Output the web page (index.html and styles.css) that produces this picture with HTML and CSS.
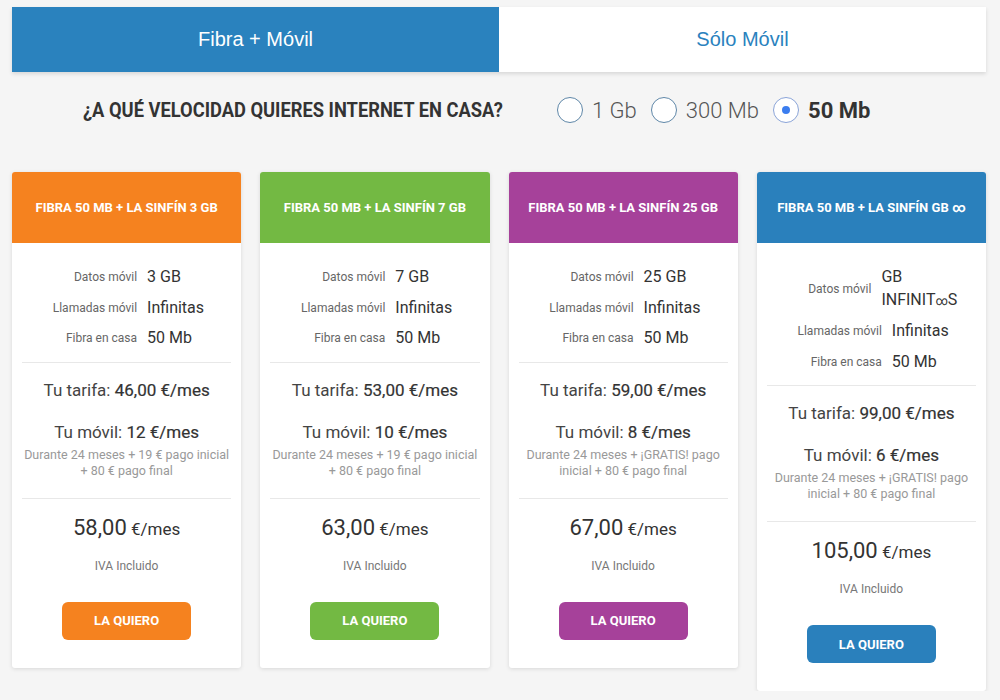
FILE: index.html
```html
<!DOCTYPE html>
<html lang="es">
<head>
  <meta charset="UTF-8" />
  <meta name="viewport" content="width=device-width, initial-scale=1.0"/>
  <title>Fibra + Móvil</title>
  <link rel="stylesheet" href="styles.css">
</head>
<body>
  <div class="wrap">
    <div class="tabs">
      <div class="tab active">Fibra + Móvil</div>
      <div class="tab">Sólo Móvil</div>
    </div>

    <div class="speed">
      <div class="question"><span>¿A QUÉ VELOCIDAD QUIERES INTERNET EN CASA?</span></div>
      <label class="option"><span class="radio"></span>1 Gb</label>
      <label class="option"><span class="radio"></span>300 Mb</label>
      <label class="option selected"><span class="radio"></span>50 Mb</label>
    </div>

    <div class="plans">
      <div class="plan orange">
        <div class="plan-head">FIBRA 50 MB + LA SINFÍN 3 GB</div>
        <div class="plan-body">
          <div class="specs">
            <div class="spec"><span class="label">Datos móvil</span><span class="value">3 GB</span></div>
            <div class="spec"><span class="label">Llamadas móvil</span><span class="value">Infinitas</span></div>
            <div class="spec"><span class="label">Fibra en casa</span><span class="value">50 Mb</span></div>
          </div>
          <div class="line"></div>
          <div class="tarifa">Tu tarifa: <b>46,00 €/mes</b></div>
          <div class="movil">Tu móvil: <b>12 €/mes</b></div>
          <div class="note">Durante 24 meses + 19 € pago inicial + 80 € pago final</div>
          <div class="line"></div>
          <div class="price"><span class="amount">58,00</span> €/mes</div>
          <div class="iva">IVA Incluido</div>
          <button class="buy">LA QUIERO</button>
        </div>
      </div>

      <div class="plan green">
        <div class="plan-head">FIBRA 50 MB + LA SINFÍN 7 GB</div>
        <div class="plan-body">
          <div class="specs">
            <div class="spec"><span class="label">Datos móvil</span><span class="value">7 GB</span></div>
            <div class="spec"><span class="label">Llamadas móvil</span><span class="value">Infinitas</span></div>
            <div class="spec"><span class="label">Fibra en casa</span><span class="value">50 Mb</span></div>
          </div>
          <div class="line"></div>
          <div class="tarifa">Tu tarifa: <b>53,00 €/mes</b></div>
          <div class="movil">Tu móvil: <b>10 €/mes</b></div>
          <div class="note">Durante 24 meses + 19 € pago inicial + 80 € pago final</div>
          <div class="line"></div>
          <div class="price"><span class="amount">63,00</span> €/mes</div>
          <div class="iva">IVA Incluido</div>
          <button class="buy">LA QUIERO</button>
        </div>
      </div>

      <div class="plan purple">
        <div class="plan-head">FIBRA 50 MB + LA SINFÍN 25 GB</div>
        <div class="plan-body">
          <div class="specs">
            <div class="spec"><span class="label">Datos móvil</span><span class="value">25 GB</span></div>
            <div class="spec"><span class="label">Llamadas móvil</span><span class="value">Infinitas</span></div>
            <div class="spec"><span class="label">Fibra en casa</span><span class="value">50 Mb</span></div>
          </div>
          <div class="line"></div>
          <div class="tarifa">Tu tarifa: <b>59,00 €/mes</b></div>
          <div class="movil">Tu móvil: <b>8 €/mes</b></div>
          <div class="note">Durante 24 meses + ¡GRATIS! pago inicial + 80 € pago final</div>
          <div class="line"></div>
          <div class="price"><span class="amount">67,00</span> €/mes</div>
          <div class="iva">IVA Incluido</div>
          <button class="buy">LA QUIERO</button>
        </div>
      </div>

      <div class="plan blue">
        <div class="plan-head">FIBRA 50 MB + LA SINFÍN GB ∞</div>
        <div class="plan-body">
          <div class="specs">
            <div class="spec wide"><span class="label">Datos móvil</span><span class="value">GB INFINIT<span class="inf">∞</span>S</span></div>
            <div class="spec"><span class="label">Llamadas móvil</span><span class="value">Infinitas</span></div>
            <div class="spec"><span class="label">Fibra en casa</span><span class="value">50 Mb</span></div>
          </div>
          <div class="line"></div>
          <div class="tarifa">Tu tarifa: <b>99,00 €/mes</b></div>
          <div class="movil">Tu móvil: <b>6 €/mes</b></div>
          <div class="note">Durante 24 meses + ¡GRATIS! pago inicial + 80 € pago final</div>
          <div class="line"></div>
          <div class="price"><span class="amount">105,00</span> €/mes</div>
          <div class="iva">IVA Incluido</div>
          <button class="buy">LA QUIERO</button>
        </div>
      </div>
    </div>
  </div>
</body>
</html>
```

FILE: styles.css
```css
body {
  font-family: 'Roboto', 'Noto Sans', sans-serif;
  margin: 0;
  padding: 0;
  background: #f5f5f5;
  color: #333;
}
.wrap {
  padding: 7px 14px 0 12px;
}

/* tabs */
.tabs {
  display: flex;
  box-shadow: 0 2px 4px rgba(0, 0, 0, 0.12);
}
.tab {
  flex: 1;
  height: 65px;
  display: flex;
  align-items: center;
  justify-content: center;
  font-family: 'Liberation Sans', Arial, sans-serif;
  font-size: 20px;
  background: white;
  color: #2a82be;
}
.tab.active {
  background: #2a82be;
  color: white;
}

/* speed selector */
.speed {
  display: flex;
  align-items: center;
  height: 76px;
  padding-left: 71px;
}
.question {
  width: 420px;
  margin-right: 54px;
  white-space: nowrap;
}
.question span {
  display: inline-block;
  font-size: 20px;
  font-weight: bold;
  color: #333;
  transform: scaleX(0.915);
  transform-origin: left center;
}
.option {
  display: flex;
  align-items: center;
  gap: 9px;
  margin-right: 14px;
  font-size: 22px;
  font-weight: 300;
  color: #555;
}
.radio {
  width: 24px;
  height: 24px;
  border: 1px solid #5f87a8;
  border-radius: 50%;
  background: white;
  position: relative;
}
.option.selected {
  font-weight: bold;
  color: #333;
}
.option.selected .radio {
  border-color: #8aa4d8;
}
.option.selected .radio::after {
  content: "";
  position: absolute;
  left: 8px;
  top: 8px;
  width: 8px;
  height: 8px;
  border-radius: 50%;
  background: #3b7def;
}

/* plans */
.plans {
  display: grid;
  grid-template-columns: repeat(4, 1fr);
  gap: 19px;
  margin-top: 24px;
  align-items: start;
}
.plan {
  background: white;
  border-radius: 3px;
  box-shadow: 0 1px 4px rgba(0, 0, 0, 0.12);
}
.plan-head {
  height: 71px;
  display: flex;
  align-items: center;
  justify-content: center;
  color: white;
  font-size: 13px;
  font-weight: bold;
  border-radius: 3px 3px 0 0;
}
.orange .plan-head, .orange .buy { background: #f5821f; }
.green .plan-head, .green .buy { background: #73b943; }
.purple .plan-head, .purple .buy { background: #a6419a; }
.blue .plan-head, .blue .buy { background: #2a80bc; }

.plan-body {
  padding: 19px 10px 28px;
  text-align: center;
}
.specs {
  margin-bottom: 8px;
}
.spec {
  display: flex;
  align-items: center;
  padding: 4px 0;
  text-align: left;
}
.spec .label {
  flex: 0 0 55%;
  box-sizing: border-box;
  text-align: right;
  font-size: 12px;
  color: #666;
}
.spec .value {
  flex: 1;
  padding-left: 10px;
  font-size: 16px;
  line-height: 22.5px;
  color: #333;
}
.spec.wide .label {
  flex-basis: 50%;
}
.spec.wide .value {
  padding-right: 14px;
}
.inf {
  font-size: 12px;
}
.line {
  border-top: 1px solid #e8e8e8;
}
.tarifa {
  padding-top: 15px;
  font-size: 17px;
  line-height: 24px;
  color: #444;
}
.movil {
  margin-top: 18px;
  font-size: 17px;
  line-height: 24px;
  color: #444;
}
.tarifa b, .movil b {
  font-weight: normal;
  -webkit-text-stroke: 0.2px #333;
  color: #333;
}
.note {
  margin: 3px 0 19px;
  font-size: 12.5px;
  line-height: 16px;
  color: #999;
}
.price {
  margin-top: 15px;
  font-size: 17px;
  line-height: 28px;
  color: #333;
}
.price .amount {
  font-size: 22px;
}
.iva {
  margin-top: 15px;
  font-size: 12px;
  line-height: 16px;
  color: #777;
}
.buy {
  margin-top: 28px;
  width: 129px;
  height: 38px;
  border: none;
  border-radius: 6px;
  color: white;
  font-family: 'Roboto', sans-serif;
  font-size: 13px;
  font-weight: bold;
  cursor: pointer;
}
```
